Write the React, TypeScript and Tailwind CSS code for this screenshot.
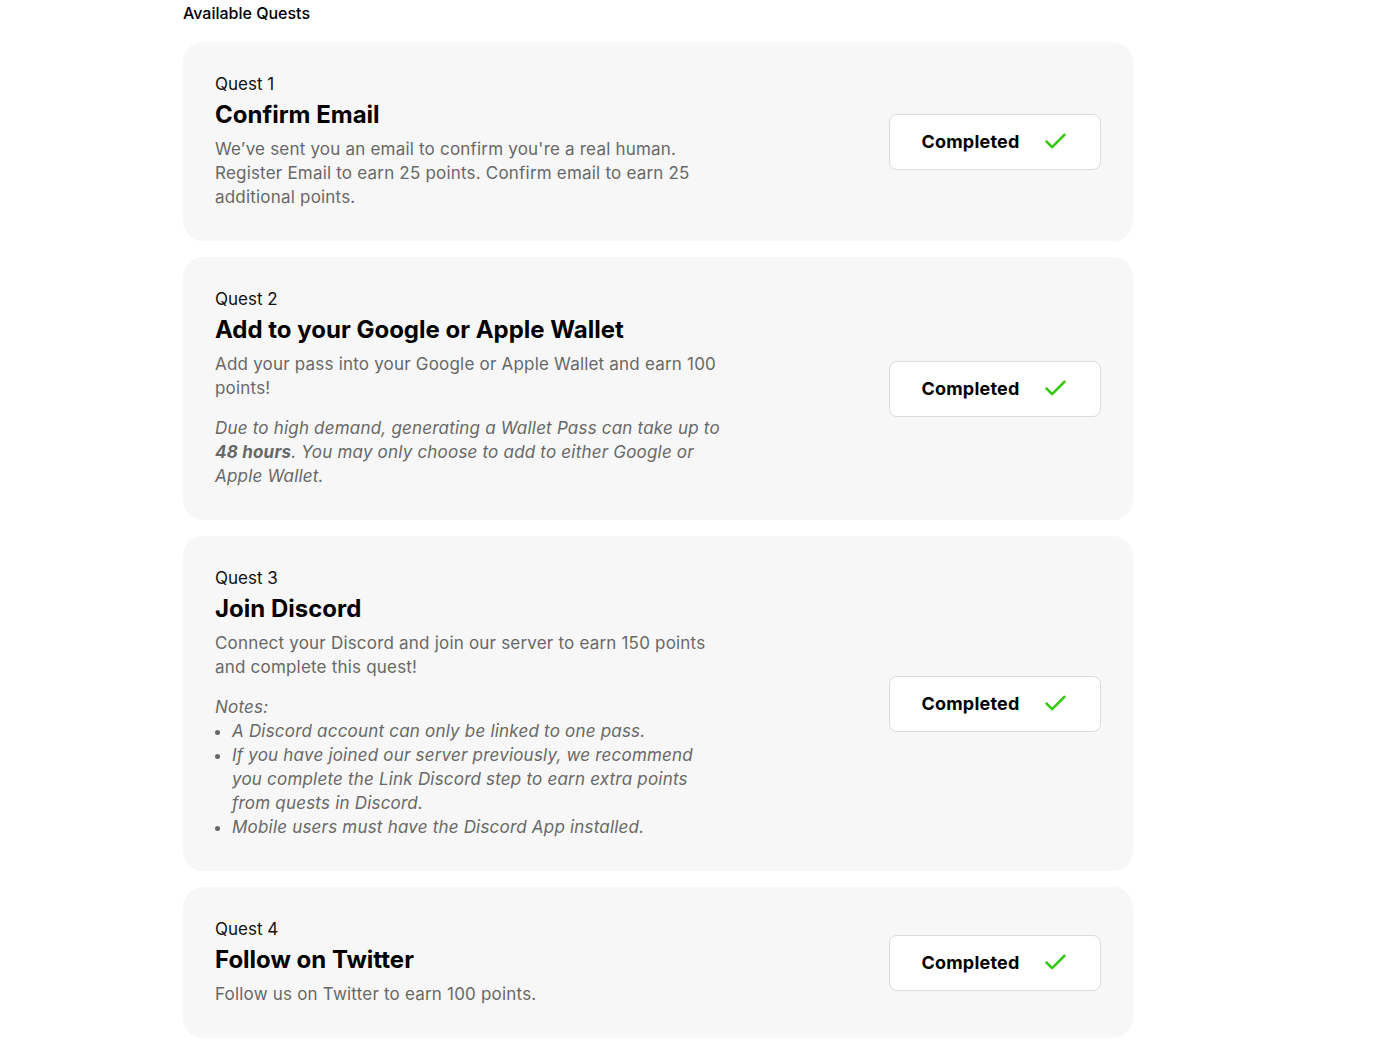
import React from 'react'
import { Check } from 'lucide-react'

type Quest = {
  n: number
  title: string
  body: React.ReactNode
}

const CompletedButton = () => (
  <div className="flex h-14 w-[212px] shrink-0 items-center justify-center gap-[22px] rounded-lg border border-[#dcdcdc] bg-white">
    <span className="text-[18px] font-bold tracking-[0.2px] text-black">Completed</span>
    <Check size={27} strokeWidth={2.2} className="text-[#35c90f]" />
  </div>
)

const quests: Quest[] = [
  {
    n: 1,
    title: 'Confirm Email',
    body: (
      <p>
        We’ve sent you an email to confirm you're a real human. Register Email to earn 25 points. Confirm email to
        earn 25 additional points.
      </p>
    ),
  },
  {
    n: 2,
    title: 'Add to your Google or Apple Wallet',
    body: (
      <>
        <p>Add your pass into your Google or Apple Wallet and earn 100 points!</p>
        <p className="mt-4 italic">
          Due to high demand, generating a Wallet Pass can take up to <b className="font-bold">48 hours</b>. You may
          only choose to add to either Google or Apple Wallet.
        </p>
      </>
    ),
  },
  {
    n: 3,
    title: 'Join Discord',
    body: (
      <>
        <p>Connect your Discord and join our server to earn 150 points and complete this quest!</p>
        <div className="mt-4 italic">
          <p>Notes:</p>
          <ul className="list-disc pl-[17px]">
            <li>A Discord account can only be linked to one pass.</li>
            <li>
              If you have joined our server previously, we recommend you complete the Link Discord step to earn extra
              points from quests in Discord.
            </li>
            <li>Mobile users must have the Discord App installed.</li>
          </ul>
        </div>
      </>
    ),
  },
  {
    n: 4,
    title: 'Follow on Twitter',
    body: <p>Follow us on Twitter to earn 100 points.</p>,
  },
]

export default function App() {
  return (
    <div className="min-h-screen bg-white font-['Inter',sans-serif]">
      <div className="ml-[183px] w-[950px]">
        <h2 className="text-[16px] font-medium leading-[26px] text-black">Available Quests</h2>
        <div className="mt-4 flex flex-col gap-4">
          {quests.map((q) => (
            <div key={q.n} className="flex items-center justify-between rounded-[20px] bg-[#f7f7f7] px-8 py-8">
              <div className="w-[510px]">
                <div className="text-[17px] leading-[20px] text-[#111]">Quest {q.n}</div>
                <h3 className="mt-[5px] text-[24px] font-bold leading-[32px] text-black">{q.title}</h3>
                <div className="mt-[6px] text-[17px] leading-6 tracking-[0.2px] text-[#686868]">{q.body}</div>
              </div>
              <CompletedButton />
            </div>
          ))}
        </div>
      </div>
    </div>
  )
}
